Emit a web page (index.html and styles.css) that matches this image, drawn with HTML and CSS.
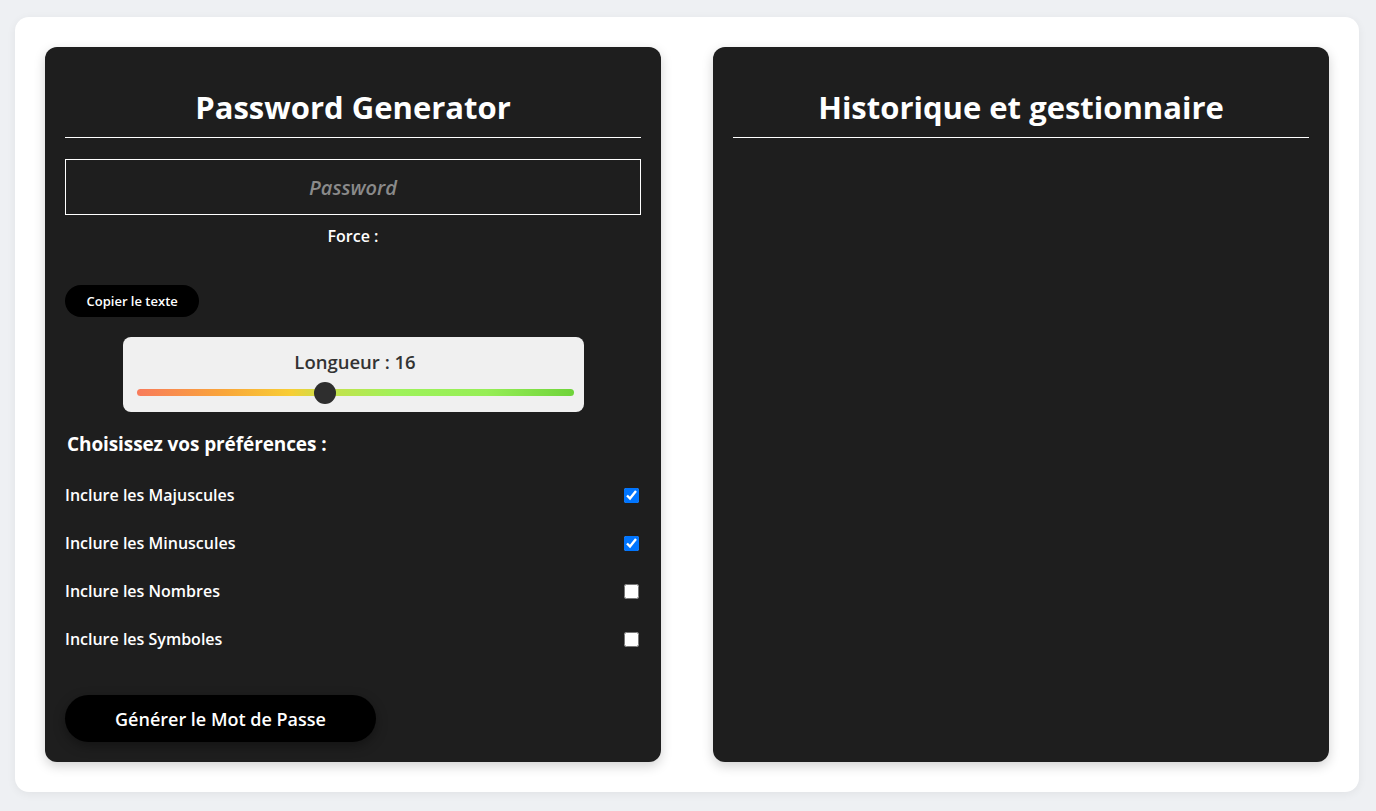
FILE: index.html
```html
<!DOCTYPE html>
<html lang="fr">
<head>
<meta charset="utf-8">
<title>Password Generator</title>
<link rel="stylesheet" href="styles.css">
</head>
<body>
<main class="container">
  <section class="card">
    <h1 class="card-title">Password Generator</h1>
    <hr class="divider">
    <input class="password-field" type="text" placeholder="Password" readonly>
    <p class="force">Force :</p>
    <button class="copy-btn" type="button">Copier le texte</button>
    <div class="length-box">
      <p class="length-label">Longueur : 16</p>
      <input class="range" type="range" min="4" max="32" value="16">
    </div>
    <h2 class="pref-title">Choisissez vos préférences :</h2>
    <ul class="options">
      <li class="option"><span>Inclure les Majuscules</span><input type="checkbox" checked></li>
      <li class="option"><span>Inclure les Minuscules</span><input type="checkbox" checked></li>
      <li class="option"><span>Inclure les Nombres</span><input type="checkbox"></li>
      <li class="option"><span>Inclure les Symboles</span><input type="checkbox"></li>
    </ul>
    <button class="generate-btn" type="button">Générer le Mot de Passe</button>
  </section>
  <section class="card">
    <h1 class="card-title">Historique et gestionnaire</h1>
    <hr class="divider">
  </section>
</main>
</body>
</html>
```
FILE: styles.css
```css
* { box-sizing: border-box; }
html, body { margin: 0; padding: 0; }
body {
  background: #eef0f3;
  font-family: "Open Sans", "Noto Sans", sans-serif;
  color: #fff;
  width: 1376px;
  height: 811px;
  overflow: hidden;
}
.container {
  margin: 17px 0 0 15px;
  width: 1344px;
  height: 775px;
  background: #fff;
  border-radius: 14px;
  box-shadow: 0 2px 10px rgba(0,0,0,0.06);
  padding: 30px;
  display: grid;
  grid-template-columns: 616px 616px;
  column-gap: 52px;
}
.card {
  background: #1e1e1e;
  border-radius: 12px;
  padding: 20px;
  height: 715px;
  display: flex;
  flex-direction: column;
  box-shadow: 0 4px 12px rgba(0,0,0,0.18);
}
.card-title {
  margin: 20px 0 10px;
  font-size: 31px;
  line-height: 40px;
  font-weight: 700;
  text-align: center;
  letter-spacing: 0;
}
.divider {
  margin: 0;
  border: 0;
  border-top: 1px solid #fff;
}
.password-field {
  margin-top: 21px;
  height: 56px;
  width: 100%;
  background: transparent;
  border: 1px solid #fff;
  color: #fff;
  text-align: center;
  font-family: inherit;
  font-style: italic;
  font-weight: 600;
  font-size: 20px;
  outline: none;
}
.password-field::placeholder { color: #8a8a8a; }
.force {
  margin: 10px 0 0;
  text-align: center;
  font-size: 16px;
  font-weight: 600;
  line-height: 22px;
}
.copy-btn {
  align-self: flex-start;
  margin-top: 38px;
  height: 32px;
  padding: 0 21.5px;
  border: 0;
  border-radius: 16px;
  background: #000;
  color: #fff;
  font-family: inherit;
  font-size: 13px;
  font-weight: 600;
}
.length-box {
  align-self: center;
  margin-top: 20px;
  width: 461px;
  height: 75px;
  background: #f0f0f0;
  border-radius: 8px;
  padding: 12px 10px 0 14px;
  display: flex;
  flex-direction: column;
  align-items: center;
}
.length-label {
  margin: 0;
  color: #333;
  font-size: 18.5px;
  font-weight: 600;
  line-height: 26px;
  letter-spacing: 0;
}
.range {
  -webkit-appearance: none;
  appearance: none;
  margin: 14px 0 0;
  width: 437px;
  height: 7px;
  border-radius: 4px;
  background: linear-gradient(90deg, #f87b5b 0%, #f9a63a 20%, #f8cd35 35%, #c8e04a 43%, #9ef25a 60%, #96ee56 80%, #6fd33a 100%);
  outline: none;
  align-self: flex-start;
}
.range::-webkit-slider-thumb {
  -webkit-appearance: none;
  appearance: none;
  width: 22px;
  height: 22px;
  border-radius: 50%;
  background: #2e2e2e;
  border: 0;
}
.pref-title {
  margin: 19px 0 0 2px;
  font-size: 19px;
  font-weight: 700;
  line-height: 26px;
  letter-spacing: -0.1px;
}
.options {
  list-style: none;
  margin: 26px 0 0;
  padding: 0;
  display: flex;
  flex-direction: column;
  gap: 24px;
}
.option {
  display: flex;
  justify-content: space-between;
  align-items: center;
  height: 24px;
  font-size: 16px;
  font-weight: 600;
}
.option input {
  margin: 0 2px 0 0;
  width: 15px;
  height: 15px;
}
.generate-btn {
  align-self: flex-start;
  margin-top: 44px;
  width: 311px;
  height: 47px;
  border: 0;
  border-radius: 24px;
  background: #000;
  color: #fff;
  font-family: inherit;
  font-size: 18px;
  font-weight: 600;
  box-shadow: 0 4px 12px rgba(0,0,0,0.35);
}
```
